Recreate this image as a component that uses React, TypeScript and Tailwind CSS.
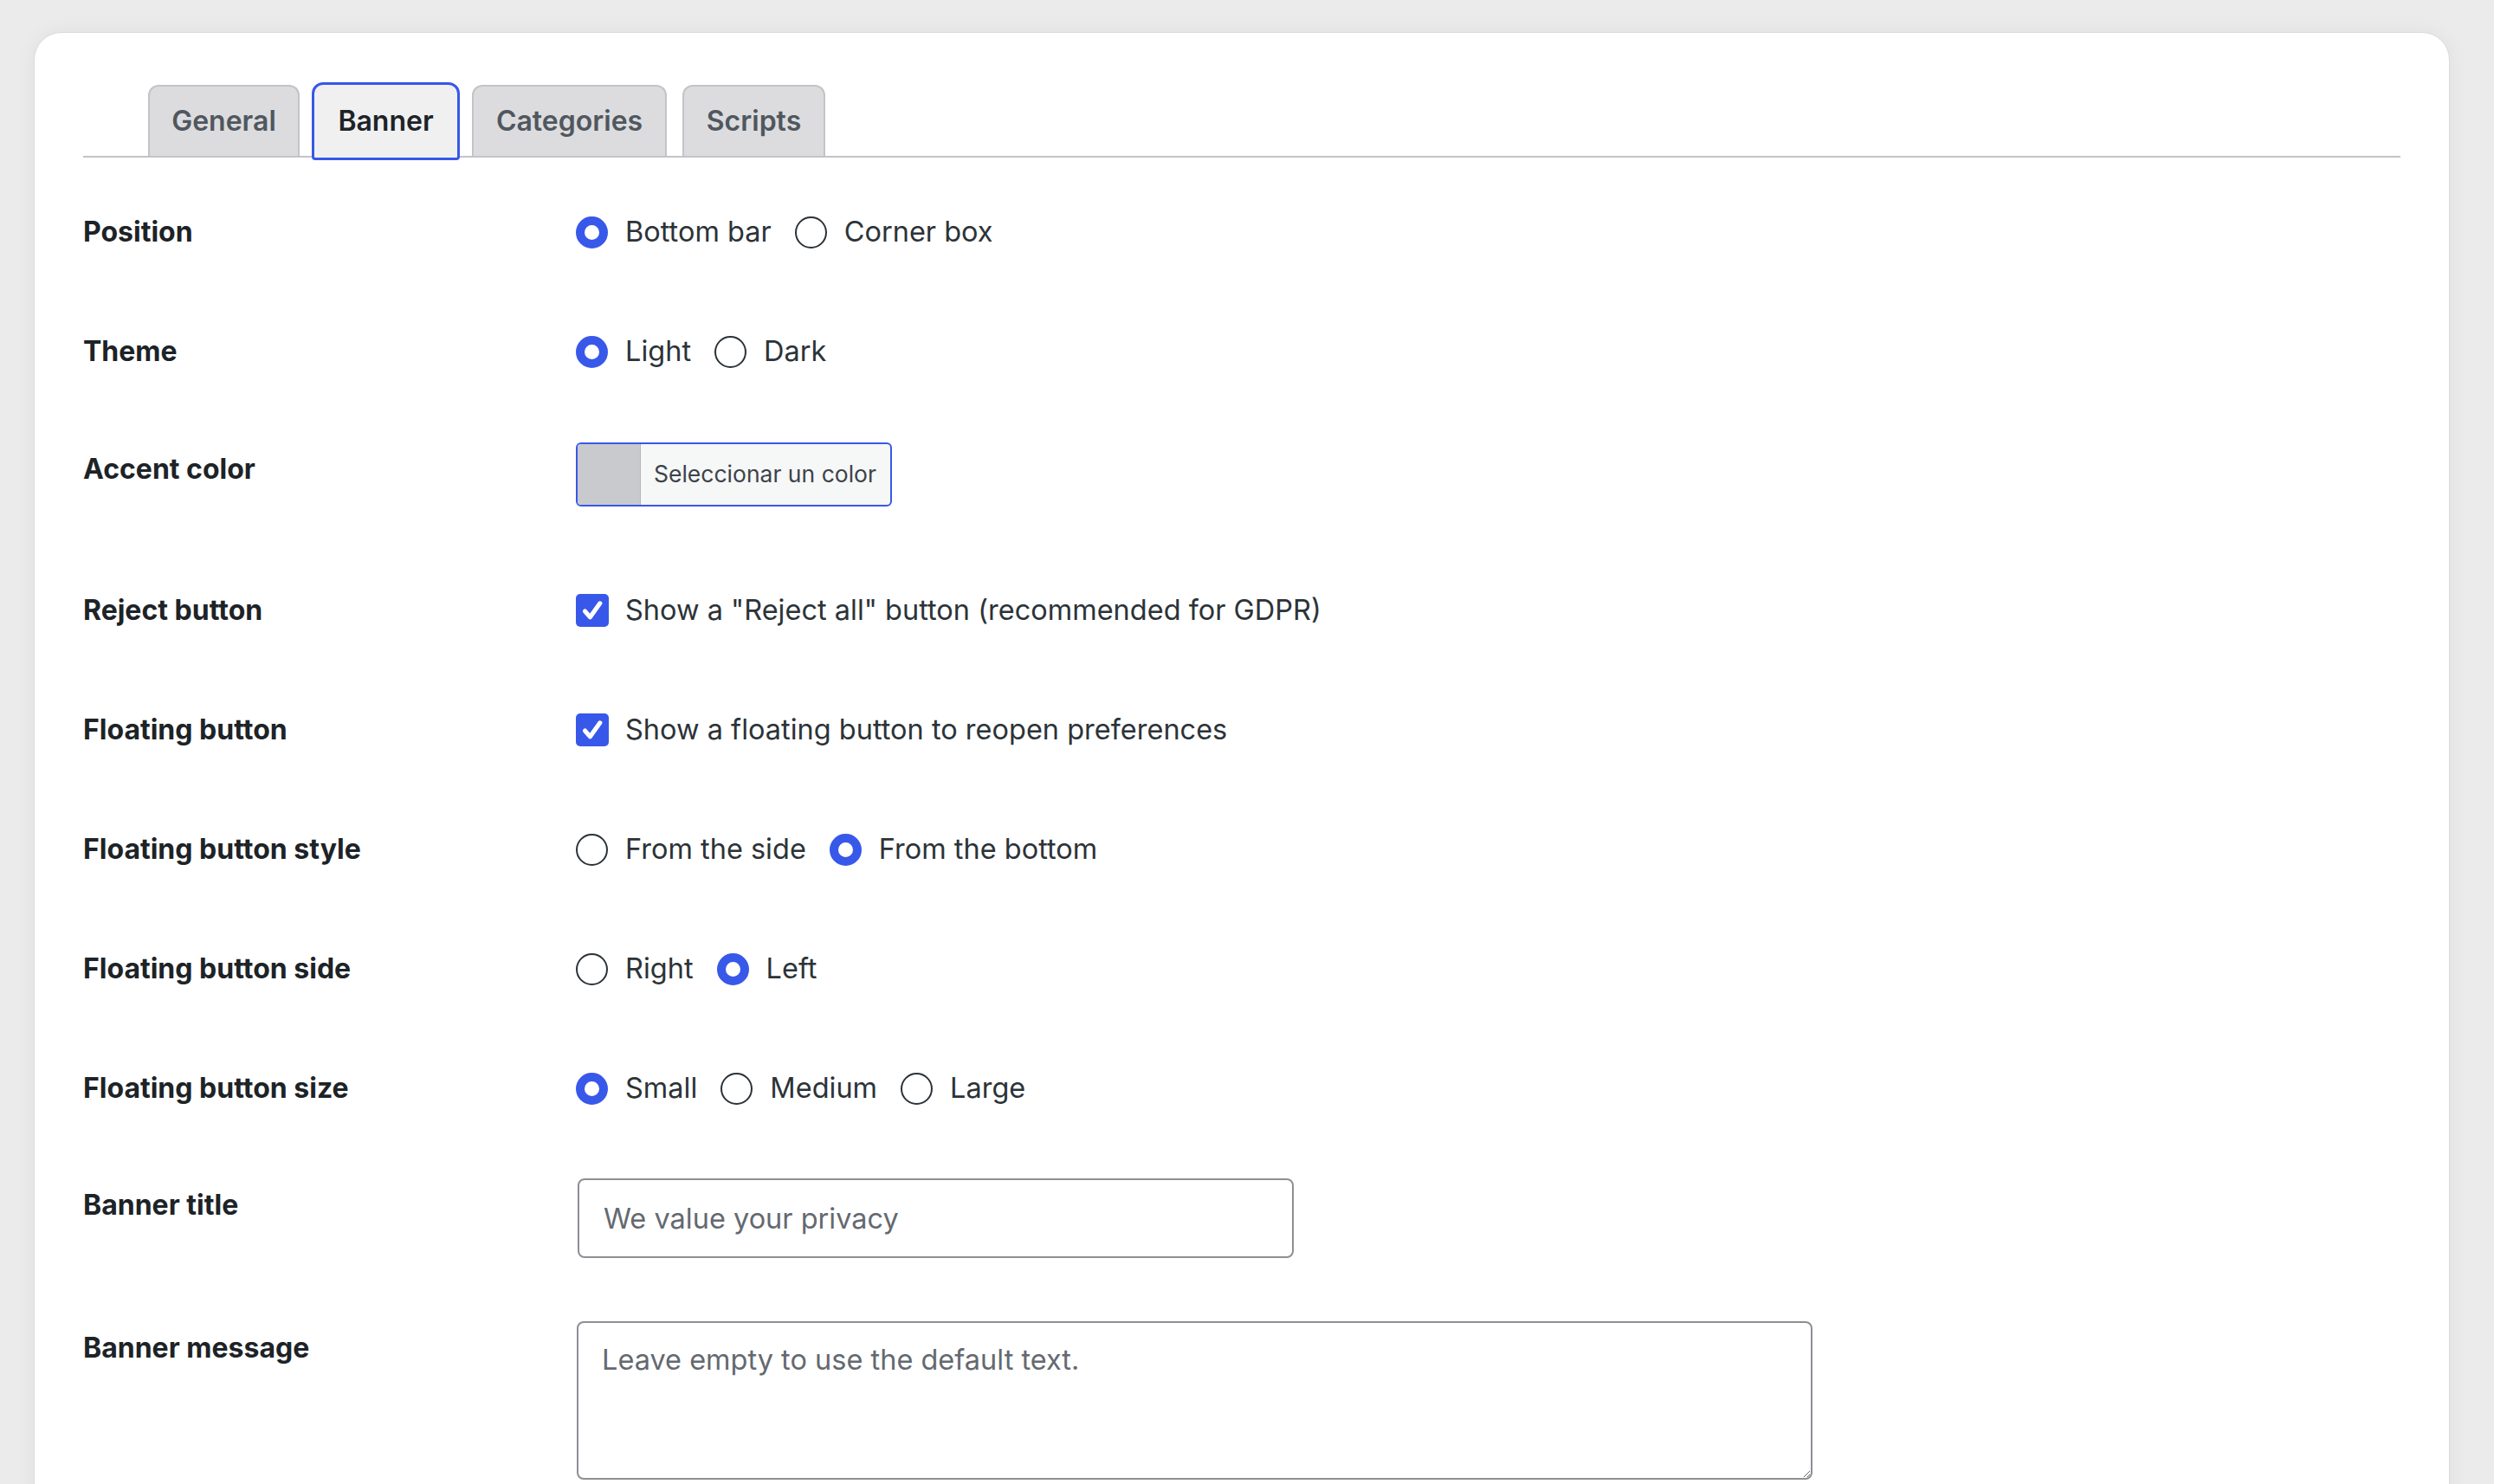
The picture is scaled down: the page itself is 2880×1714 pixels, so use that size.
import React from 'react';

const font = { fontFamily: 'Inter, "Noto Sans", sans-serif' };

const tabs = [
  { name: 'General', w: 'w-[175px]' },
  { name: 'Banner', w: 'w-[171px]', active: true },
  { name: 'Categories', w: 'w-[225px]' },
  { name: 'Scripts', w: 'w-[165px] ml-[4px]' },
];

const Radio = ({ checked, label }: { checked?: boolean; label: string }) => (
  <label className="flex items-center gap-[20px]">
    <span
      className={
        checked
          ? 'h-[37px] w-[37px] shrink-0 rounded-full border-[10px] border-[#3858e9] bg-white'
          : 'h-[37px] w-[37px] shrink-0 rounded-full border-2 border-[#2c3338] bg-white'
      }
    />
    <span className="text-[32.5px] leading-[1.3] text-[#2c3338]">{label}</span>
  </label>
);

const RadioGroup = ({ options, selected }: { options: string[]; selected: number }) => (
  <div className="flex items-center gap-[27px]">
    {options.map((o, i) => (
      <Radio key={o} label={o} checked={i === selected} />
    ))}
  </div>
);

const Checkbox = ({ label }: { label: string }) => (
  <label className="flex items-center gap-[19px]">
    <span className="flex h-[38px] w-[38px] shrink-0 items-center justify-center rounded-[5px] bg-[#3858e9]">
      <svg viewBox="0 0 20 20" className="h-[34px] w-[34px]">
        <path d="M5 10.6l3.5 4L15.2 5.2" fill="none" stroke="white" strokeWidth="3" strokeLinecap="round" strokeLinejoin="round" />
      </svg>
    </span>
    <span className="text-[32.5px] leading-[1.3] text-[#2c3338]">{label}</span>
  </label>
);

const Label = ({ children, className = '' }: { children: React.ReactNode; className?: string }) => (
  <div className={`w-[569px] shrink-0 text-[32px] font-bold leading-[1.3] text-[#1d2327] ${className}`}>
    {children}
  </div>
);

const Row = ({ label, children }: { label: string; children: React.ReactNode }) => (
  <div className="flex h-[138px] items-center">
    <Label>{label}</Label>
    {children}
  </div>
);

export default function App() {
  return (
    <div className="min-h-[1714px] bg-[#ebebeb] pl-[39px] pr-[51px] pt-[37px]" style={font}>
      <div className="min-h-[1800px] rounded-t-[32px] border border-[#dcdcde] bg-white px-[56px] pt-[57px] shadow-[0_0_24px_rgba(0,0,0,0.05)]">
        {/* tabs */}
        <div className="flex h-[87px] items-end gap-[14px] border-b-2 border-[#c3c4c7] pl-[75px]">
          {tabs.map((t) =>
            t.active ? (
              <div
                key={t.name}
                className={`${t.w} -mb-[5px] flex h-[90px] items-center justify-center rounded-t-[13px] rounded-b-[4px] border-[3px] border-[#3858e9] bg-[#f0f0f1] text-[32px] font-semibold text-[#1d2327]`}
              >
                {t.name}
              </div>
            ) : (
              <div
                key={t.name}
                className={`${t.w} flex h-[82px] items-center justify-center rounded-t-[12px] border-2 border-b-0 border-[#c3c4c7] bg-[#dcdcde] pb-[1px] text-[32px] font-semibold text-[#50575e]`}
              >
                {t.name}
              </div>
            )
          )}
        </div>

        <div className="mt-[17px]">
          <Row label="Position">
            <RadioGroup options={['Bottom bar', 'Corner box']} selected={0} />
          </Row>
          <Row label="Theme">
            <RadioGroup options={['Light', 'Dark']} selected={0} />
          </Row>

          <div className="flex h-[161px] items-start">
            <Label className="pt-[46px]">Accent color</Label>
            <button className="mt-[36px] flex h-[74px] w-[365px] overflow-hidden rounded-[6px] border-2 border-[#3858e9] bg-[#f6f7f7]">
              <span className="h-full w-[73px] border-r border-[#b4b6ba] bg-[#c9cacd]" />
              <span className="flex h-full flex-1 items-center pl-[15px] text-[26.5px] text-[#3c434a]">
                Seleccionar un color
              </span>
            </button>
          </div>

          <Row label="Reject button">
            <Checkbox label={'Show a "Reject all" button (recommended for GDPR)'} />
          </Row>
          <Row label="Floating button">
            <Checkbox label="Show a floating button to reopen preferences" />
          </Row>
          <Row label="Floating button style">
            <RadioGroup options={['From the side', 'From the bottom']} selected={1} />
          </Row>
          <Row label="Floating button side">
            <RadioGroup options={['Right', 'Left']} selected={1} />
          </Row>
          <Row label="Floating button size">
            <RadioGroup options={['Small', 'Medium', 'Large']} selected={0} />
          </Row>

          <div className="flex h-[165px] items-start">
            <Label className="pt-[45px]">Banner title</Label>
            <input
              className="ml-[2px] mt-[35px] h-[92px] w-[827px] rounded-[8px] border-2 border-[#8c8f94] bg-white px-[28px] text-[32.5px] text-[#2c3338] outline-none placeholder:text-[#646970]"
              placeholder="We value your privacy"
            />
          </div>

          <div className="flex items-start pb-[60px]">
            <Label className="pt-[45px]">Banner message</Label>
            <textarea
              className="ml-[1px] mt-[35px] h-[183px] w-[1427px] rounded-[8px] border-2 border-[#8c8f94] bg-white px-[27px] pt-[20px] text-[32.5px] leading-[1.4] text-[#2c3338] outline-none placeholder:text-[#646970]"
              placeholder="Leave empty to use the default text."
            />
          </div>
        </div>
      </div>
    </div>
  );
}
